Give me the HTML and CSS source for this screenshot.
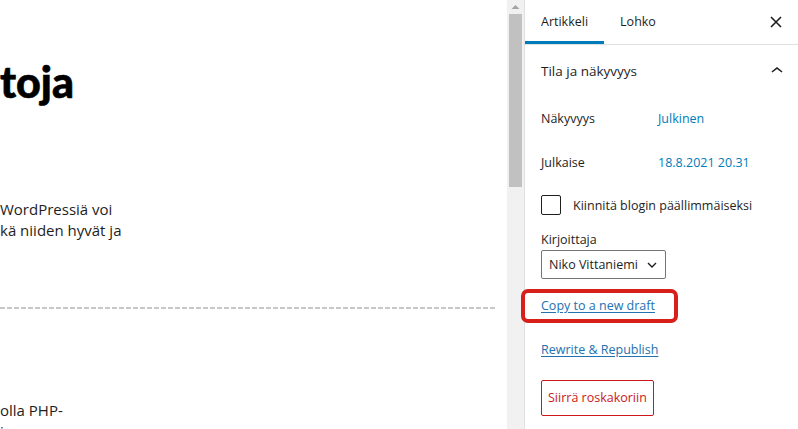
FILE: index.html
```html
<!DOCTYPE html>
<html lang="fi">
<head>
<meta charset="utf-8">
<title>Editori</title>
<link rel="stylesheet" href="styles.css">
</head>
<body>
  <main class="editor">
    <div class="canvas">
      <h1 class="title">toja</h1>
      <p class="para first">WordPressiä voi<br>kä niiden hyvät ja</p>
      <hr class="sep">
      <p class="para last">olla PHP-<br>i</p>
    </div>
  </main>
  <div class="scrollbar">
    <div class="sb-arrow"><svg width="9" height="6" viewBox="0 0 9 6"><path d="M0.5 5L4.5 1L8.5 5Z" fill="#a3a3a3"/></svg></div>
    <div class="sb-thumb"></div>
  </div>
  <aside class="sidebar">
    <div class="tabs">
      <div class="tab active">Artikkeli</div>
      <div class="tab">Lohko</div>
      <div class="close">
        <svg width="12" height="12" viewBox="0 0 12 12"><path d="M1 1L11 11M11 1L1 11" stroke="#1e1e1e" stroke-width="1.6" fill="none"/></svg>
      </div>
    </div>
    <div class="panel-head">
      <span class="panel-title">Tila ja näkyvyys</span>
      <svg class="chev" width="24" height="24" viewBox="0 0 24 24"><path d="M6.5 12.4L12 8l5.5 4.4-.9 1.2L12 10l-4.6 3.6-.9-1.2z" fill="#1e1e1e"/></svg>
    </div>
    <div class="panel-body">
      <div class="row"><span class="label">Näkyvyys</span><span class="value">Julkinen</span></div>
      <div class="row"><span class="label">Julkaise</span><span class="value">18.8.2021 20.31</span></div>
      <div class="check-row"><span class="checkbox"></span><span class="check-label">Kiinnitä blogin päällimmäiseksi</span></div>
      <div class="field-label">Kirjoittaja</div>
      <div class="select"><span>Niko Vittaniemi</span><svg width="10" height="6" viewBox="0 0 10 6"><path d="M1 1L5 5L9 1" stroke="#1e1e1e" stroke-width="1.4" fill="none"/></svg></div>
      <div class="link first-link">Copy to a new draft</div>
      <div class="link second-link">Rewrite &amp; Republish</div>
      <div class="trash">Siirrä roskakoriin</div>
    </div>
  </aside>
  <div class="highlight"></div>
</body>
</html>
```

FILE: styles.css
```css
html, body {
  margin: 0;
  padding: 0;
}
body {
  display: flex;
  width: 798px;
  height: 429px;
  overflow: hidden;
  position: relative;
  background: #fff;
  font-family: "Open Sans", "Noto Sans", sans-serif;
  color: #1e1e1e;
}
.editor {
  width: 507px;
  flex: none;
  overflow: hidden;
}
.canvas {
  padding-right: 10px;
}
.title {
  margin: 58px 0 0 0;
  font-family: "Lato", "Open Sans", sans-serif;
  font-weight: 900;
  font-size: 43px;
  line-height: 48px;
  color: #000;
  -webkit-text-stroke: 0.6px #000;
}
.para {
  margin: 0;
  font-size: 15px;
  line-height: 21px;
  color: #1e1e1e;
}
.para.first {
  margin-top: 93px;
}
.sep {
  margin: 66px 0 0 0;
  border: 0;
  height: 2px;
  background: repeating-linear-gradient(to right, #c8c8c8 0 5px, transparent 5px 7px);
}
.para.last {
  margin-top: 91px;
}
.scrollbar {
  width: 17px;
  flex: none;
  background: #f1f1f1;
  display: flex;
  flex-direction: column;
  align-items: center;
}
.sb-arrow {
  height: 14px;
  display: flex;
  align-items: center;
  justify-content: center;
}
.sb-thumb {
  width: 13px;
  height: 173px;
  background: #c1c1c1;
}
.sidebar {
  flex: 1;
  border-left: 1px solid #e0e0e0;
  font-size: 12.5px;
}
.tabs {
  display: flex;
  height: 44px;
  border-bottom: 1px solid #e0e0e0;
}
.tab {
  padding: 0 16px;
  line-height: 44px;
  color: #1e1e1e;
}
.tab.active {
  box-shadow: inset 0 -3px 0 #007cba;
}
.close {
  margin-left: auto;
  margin-right: 4px;
  width: 36px;
  display: flex;
  align-items: center;
  justify-content: center;
}
.panel-head {
  height: 51px;
  display: flex;
  align-items: center;
  justify-content: space-between;
  padding: 0 9px 0 16px;
}
.panel-title {
  font-size: 13.5px;
  font-weight: 500;
}
.panel-body {
  padding: 0 16px;
}
.row {
  height: 44px;
  display: flex;
  align-items: center;
}
.label {
  width: 117px;
  color: #1e1e1e;
}
.value {
  color: #007cba;
}
.check-row {
  margin-top: 11px;
  height: 20px;
  display: flex;
  align-items: center;
  gap: 12px;
}
.checkbox {
  width: 18px;
  height: 18px;
  border: 1px solid #1e1e1e;
  border-radius: 2px;
}
.field-label {
  margin-top: 15px;
  line-height: 20px;
}
.select {
  width: 125px;
  height: 29px;
  box-sizing: border-box;
  border: 1px solid #757575;
  border-radius: 2px;
  display: flex;
  align-items: center;
  justify-content: space-between;
  padding: 0 8px 0 7px;
}
.link {
  line-height: 20px;
  color: #2271b1;
  text-decoration: underline;
  text-underline-offset: 2px;
}
.first-link {
  margin-top: 17px;
}
.second-link {
  margin-top: 24px;
}
.trash {
  margin-top: 20px;
  display: inline-block;
  height: 36px;
  line-height: 34px;
  box-sizing: border-box;
  border: 1px solid #cc1818;
  border-radius: 2px;
  color: #cc1818;
  padding: 0 6px;
}
.highlight {
  position: absolute;
  left: 521px;
  top: 289px;
  width: 157px;
  height: 34px;
  box-sizing: border-box;
  border: 4px solid #d8201b;
  border-radius: 7px;
}
```
